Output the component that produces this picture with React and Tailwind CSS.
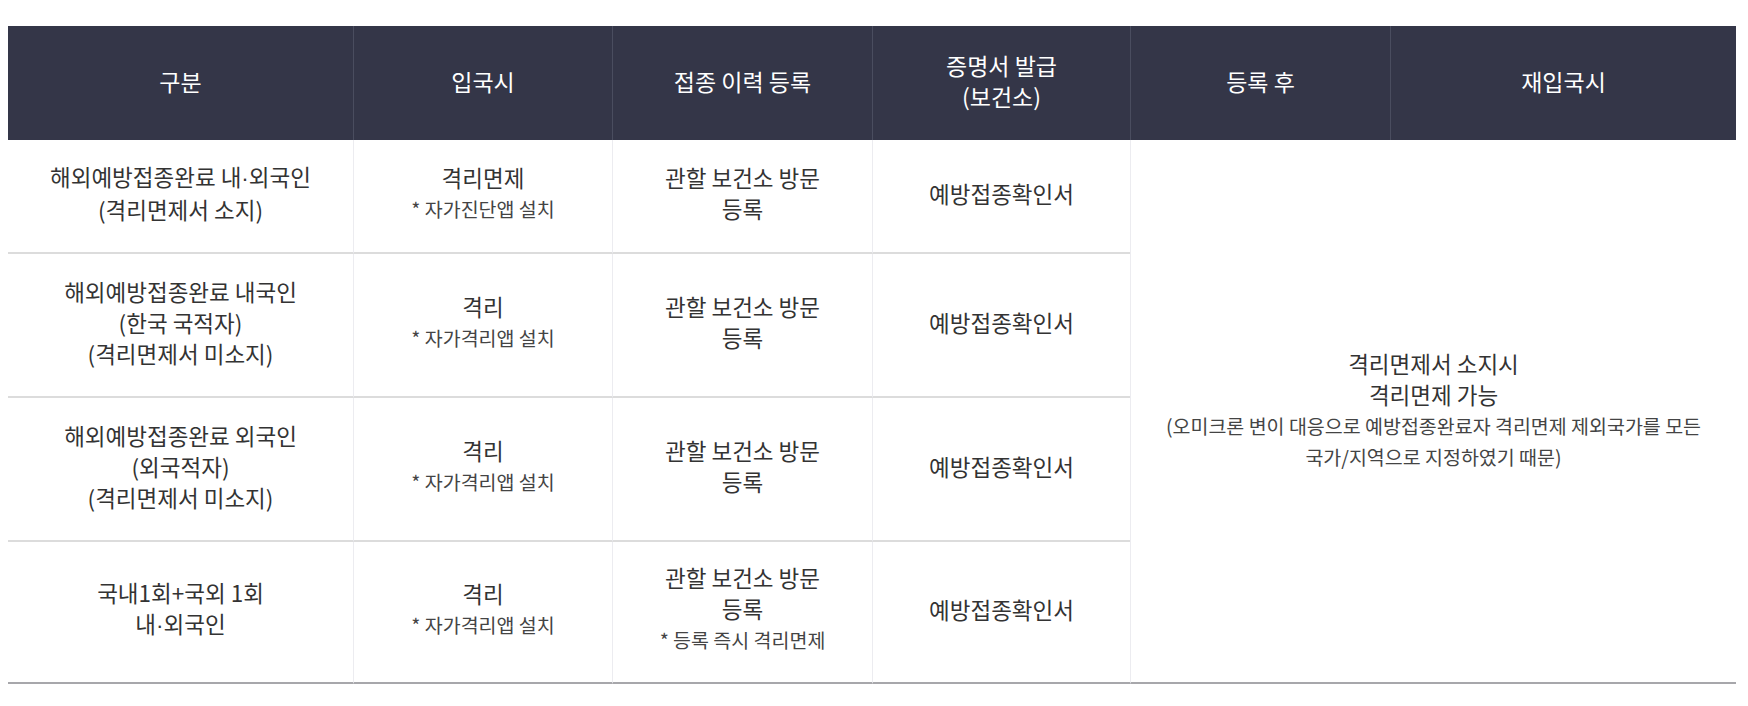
import React from "react";

const FONT = "font-['Noto_Sans_CJK_KR','Noto_Sans',sans-serif]";

function Head({ children, first }) {
  return (
    <div
      className={`flex items-center justify-center text-center bg-[#343648] text-white text-[23px] leading-[31px] pb-[4px] ${
        first ? "" : "border-l border-[#4a4d5f]"
      }`}
    >
      <div>{children}</div>
    </div>
  );
}

function Dot() {
  return <span className="font-['Liberation_Sans',sans-serif]">·</span>;
}

function Sub({ children }) {
  return <div className="text-[19.5px] leading-[32px] text-[#444444]">{children}</div>;
}

export default function App() {
  const rows = [
    {
      c1: [
        <>
          해외예방접종완료 내<Dot />외국인
        </>,
        "(격리면제서 소지)",
      ],
      c2: "격리면제",
      c2s: "* 자가진단앱 설치",
    },
    {
      c1: ["해외예방접종완료 내국인", "(한국 국적자)", "(격리면제서 미소지)"],
      c2: "격리",
      c2s: "* 자가격리앱 설치",
    },
    {
      c1: ["해외예방접종완료 외국인", "(외국적자)", "(격리면제서 미소지)"],
      c2: "격리",
      c2s: "* 자가격리앱 설치",
    },
    {
      c1: [
        "국내1회+국외 1회",
        <>
          내<Dot />외국인
        </>,
      ],
      c2: "격리",
      c2s: "* 자가격리앱 설치",
      c3s: "* 등록 즉시 격리면제",
    },
  ];

  const cellBase =
    "flex items-center justify-center text-center text-[#333333] text-[22.5px] leading-[31px] border-b-2 pb-[6px]";

  return (
    <div className={`w-[1748px] h-[706px] bg-white pt-[26px] pl-[8px] ${FONT}`}>
      <div className="w-[1728px] grid grid-cols-[345px_259px_260px_258px_260px_346px] grid-rows-[114px_114px_144px_144px_142px]">
        <Head first>구분</Head>
        <Head>입국시</Head>
        <Head>접종 이력 등록</Head>
        <Head>
          증명서 발급
          <br />
          (보건소)
        </Head>
        <Head>등록 후</Head>
        <Head>재입국시</Head>

        {rows.map((r, i) => {
          const last = i === rows.length - 1;
          const b = last ? "border-b-[#a7a7ab]" : "border-b-[#dcdcdc]";
          return (
            <React.Fragment key={i}>
              <div className={`${cellBase} ${b}`} style={{ gridColumn: 1, gridRow: i + 2 }}>
                <div>
                  {r.c1.map((l, k) => (
                    <div key={k}>{l}</div>
                  ))}
                </div>
              </div>
              <div
                className={`${cellBase} ${b} border-l border-l-[#ececf0]`}
                style={{ gridColumn: 2, gridRow: i + 2 }}
              >
                <div>
                  <div>{r.c2}</div>
                  <Sub>{r.c2s}</Sub>
                </div>
              </div>
              <div
                className={`${cellBase} ${b} border-l border-l-[#ececf0]`}
                style={{ gridColumn: 3, gridRow: i + 2 }}
              >
                <div>
                  <div>관할 보건소 방문</div>
                  <div>등록</div>
                  {r.c3s && <Sub>{r.c3s}</Sub>}
                </div>
              </div>
              <div
                className={`${cellBase} ${b} border-l border-l-[#ececf0]`}
                style={{ gridColumn: 4, gridRow: i + 2 }}
              >
                <div>예방접종확인서</div>
              </div>
            </React.Fragment>
          );
        })}

        <div className="col-start-5 col-span-2 row-start-2 row-span-4 flex items-center justify-center text-center border-l border-l-[#ececf0] border-b-2 border-b-[#a7a7ab] text-[#333333] pb-[2px]">
          <div>
            <div className="text-[22.5px] leading-[31px]">격리면제서 소지시</div>
            <div className="text-[22.5px] leading-[31px]">격리면제 가능</div>
            <div className="text-[19.5px] leading-[31px] text-[#444444]">
              (오미크론 변이 대응으로 예방접종완료자 격리면제 제외국가를 모든
            </div>
            <div className="text-[19.5px] leading-[31px] text-[#444444]">
              국가/지역으로 지정하였기 때문)
            </div>
          </div>
        </div>
      </div>
    </div>
  );
}
